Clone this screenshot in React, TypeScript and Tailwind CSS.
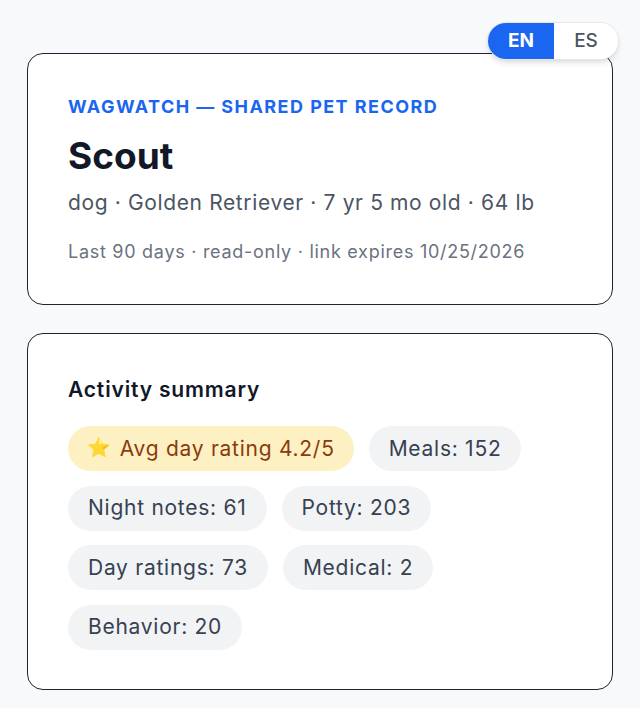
import { useState } from "react";

const chips = [
  { label: "Avg day rating 4.2/5", star: true },
  { label: "Meals: 152" },
  { label: "Night notes: 61" },
  { label: "Potty: 203" },
  { label: "Day ratings: 73" },
  { label: "Medical: 2" },
  { label: "Behavior: 20" },
];

export default function App() {
  const [lang, setLang] = useState("EN");

  return (
    <div
      className="min-h-[708px] bg-[#f8f9fb] px-[27px] pt-[53px] pb-[19px]"
      style={{ fontFamily: "Inter, 'Noto Sans', sans-serif" }}
    >
      <div className="absolute right-[21px] top-[22px] z-10 flex h-[38px] overflow-hidden rounded-full border border-[#e5e7eb] bg-white shadow-md">
        {["EN", "ES"].map((l) => (
          <button
            key={l}
            onClick={() => setLang(l)}
            className={
              lang === l
                ? "w-[66px] bg-[#1a66f0] text-[19px] font-bold text-white"
                : "w-[64px] bg-white text-[19px] font-medium text-[#4b5563]"
            }
          >
            {l}
          </button>
        ))}
      </div>

      <div className="flex flex-col gap-[28px]">
        <section className="rounded-[16px] border-[1.5px] border-[#1f2433] bg-white px-[40px] pt-[40px] pb-[39px]">
          <p className="text-[18px] leading-[26px] font-bold tracking-[0.08em] text-[#1a66f0]">
            WAGWATCH — SHARED PET RECORD
          </p>
          <h1 className="mt-[12px] text-[37px] font-bold leading-[48px] text-[#111827]">
            Scout
          </h1>
          <p className="mt-[8px] text-[21px] leading-[30px] tracking-[0.03em] text-[#4b5563]">
            dog · Golden Retriever · 7 yr 5 mo old · 64 lb
          </p>
          <p className="mt-[21px] text-[18px] leading-[26px] tracking-[0.04em] text-[#6b7280]">
            Last 90 days · read-only · link expires 10/25/2026
          </p>
        </section>

        <section className="rounded-[16px] border-[1.5px] border-[#1f2433] bg-white px-[40px] pt-[42px] pb-[39px]">
          <h2 className="text-[21px] leading-[28px] font-semibold tracking-[0.04em] text-[#111827]">
            Activity summary
          </h2>
          <div className="mt-[22px] flex flex-wrap gap-x-[15px] gap-y-[14.5px]">
            {chips.map((c) =>
              c.star ? (
                <span
                  key={c.label}
                  className="flex h-[45px] items-center gap-[8px] rounded-full bg-[#fdf1c4] px-[19px] text-[21px] tracking-[0.035em] text-[#8a3a0c]"
                >
                  <span className="text-[19px]">⭐</span>
                  {c.label}
                </span>
              ) : (
                <span
                  key={c.label}
                  className="flex h-[45px] items-center rounded-full bg-[#f1f3f5] px-[20px] text-[21px] tracking-[0.035em] text-[#374151]"
                >
                  {c.label}
                </span>
              )
            )}
          </div>
        </section>
      </div>
    </div>
  );
}
